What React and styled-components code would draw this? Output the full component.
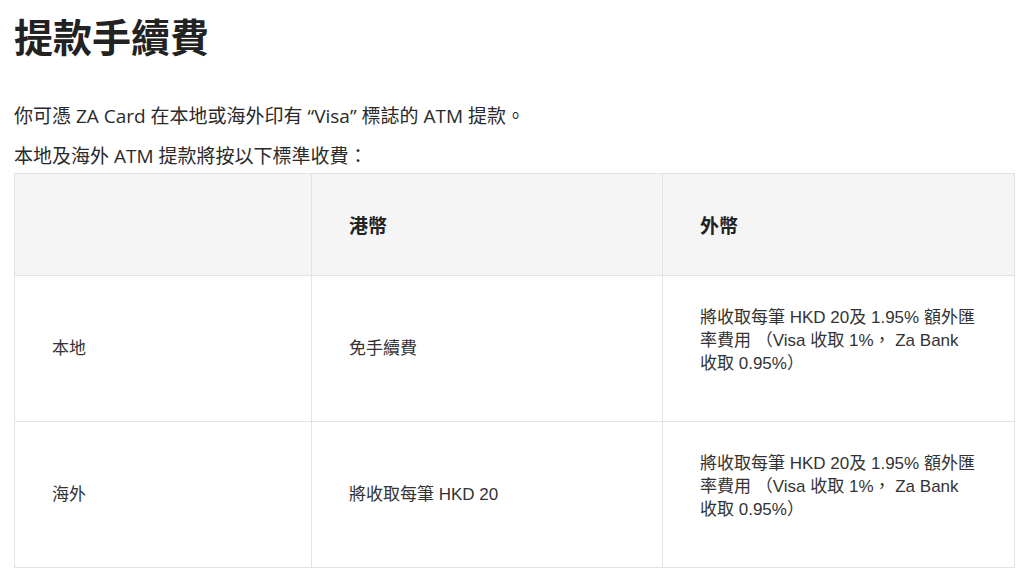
import React from "react";
import styled, { createGlobalStyle } from "styled-components";

const Global = createGlobalStyle`
  html, body { margin: 0; padding: 0; background: #ffffff; }
  body { font-family: "Noto Sans CJK TC", sans-serif; color: #222; }
`;

const Page = styled.main`
  padding: 0 10px 0 14px;
`;

const Title = styled.h1`
  margin: 0;
  padding-top: 10px;
  font-family: "Noto Sans CJK TC", sans-serif;
  font-size: 39px;
  line-height: 50px;
  font-weight: 700;
  color: #222;
`;

const Para = styled.p`
  margin: 0;
  font-family: "Open Sans", "Noto Sans CJK TC", sans-serif;
  font-size: 19px;
  line-height: 40px;
  color: #2a2a2a;
`;

const Intro = styled.div`
  margin-top: 36px;
  margin-bottom: -3px;
`;

const Table = styled.table`
  width: 1000px;
  border-collapse: collapse;
  table-layout: fixed;
  font-family: "Liberation Sans", "Noto Sans CJK TC", sans-serif;
  color: #333;
`;

const HeadCell = styled.th`
  background: #f5f5f6;
  border: 1px solid #e2e2e2;
  text-align: left;
  font-family: "Noto Sans CJK TC", sans-serif;
  font-size: 19px;
  font-weight: 700;
  color: #222;
  height: 102px;
  padding: 0 37px;
  box-sizing: border-box;
`;

const Cell = styled.td`
  border: 1px solid #e2e2e2;
  font-size: 17px;
  line-height: 23px;
  vertical-align: middle;
  padding: 30px 37px;
  height: 146px;
  box-sizing: border-box;
`;

const CellText = styled.p`
  margin: 0 0 ${(p) => (p.$gap ? "16px" : "0")} 0;
`;

const rows = [
  { region: "本地", hkd: "免手續費" },
  { region: "海外", hkd: "將收取每筆 HKD 20" },
];

const foreign =
  "將收取每筆 HKD 20及 1.95% 額外匯率費用 （Visa 收取 1%， Za Bank 收取 0.95%）";

export default function App() {
  return (
    <>
      <Global />
      <Page>
        <Title>提款手續費</Title>
        <Intro>
          <Para>你可憑 ZA Card 在本地或海外印有 “Visa” 標誌的 ATM 提款。</Para>
          <Para>本地及海外 ATM 提款將按以下標準收費：</Para>
        </Intro>
        <Table>
          <colgroup>
            <col style={{ width: "297px" }} />
            <col style={{ width: "351px" }} />
            <col style={{ width: "352px" }} />
          </colgroup>
          <thead>
            <tr>
              <HeadCell />
              <HeadCell>港幣</HeadCell>
              <HeadCell>外幣</HeadCell>
            </tr>
          </thead>
          <tbody>
            {rows.map((r) => (
              <tr key={r.region}>
                <Cell>{r.region}</Cell>
                <Cell>{r.hkd}</Cell>
                <Cell>
                  <CellText $gap>{foreign}</CellText>
                </Cell>
              </tr>
            ))}
          </tbody>
        </Table>
      </Page>
    </>
  );
}
